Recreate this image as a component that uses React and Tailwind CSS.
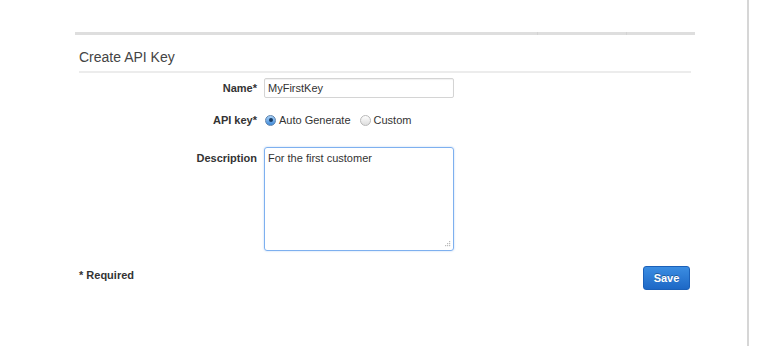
export default function App() {
  return (
    <div className="flex h-[346px] w-[778px] overflow-hidden bg-white font-['Liberation_Sans',Arial,sans-serif] text-[#333]">
      <div className="w-[747px] shrink-0 pl-[75px] pt-[32px]">
        <div className="w-[620px]">
          <div className="flex h-[3px] bg-[#dedede]">
            <div className="w-[462px]" />
            <div className="w-px bg-[#d3d3d3]" />
            <div className="w-[88px]" />
            <div className="w-px bg-[#d3d3d3]" />
          </div>
          <div className="mx-[4px] border-b-2 border-[#ececec] pt-[14px] pb-[5px] text-[14px] leading-[17px] text-[#444]">
            Create API Key
          </div>
          <div className="mx-[4px] mt-[5px] text-[11px] leading-[14px]">
            <div className="flex h-[20px] items-center">
              <div className="w-[178px] text-right font-bold">Name*</div>
              <input
                readOnly
                value="MyFirstKey"
                className="ml-[7px] h-[20px] w-[190px] rounded-[2px] border border-[#d4d4d4] px-[3px] text-[11px] text-[#333] shadow-[inset_0_1px_1px_rgba(0,0,0,0.06)] outline-none"
              />
            </div>
            <div className="mt-[12px] flex h-[20px] items-center">
              <div className="w-[178px] text-right font-bold">API key*</div>
              <div className="ml-[8px] flex items-center">
                <span className="flex h-[11px] w-[11px] items-center justify-center rounded-full border border-[#5f84ad] bg-gradient-to-b from-[#a9d2f8] to-[#3d8ad9]">
                  <span className="h-[4px] w-[4px] rounded-full bg-[#173a63]" />
                </span>
                <span className="ml-[3px]">Auto Generate</span>
                <span className="ml-[9px] h-[11px] w-[11px] rounded-full border border-[#b9b9b9] bg-gradient-to-b from-[#fdfdfd] to-[#dedede]" />
                <span className="ml-[3px]">Custom</span>
              </div>
            </div>
            <div className="mt-[17px] flex items-start">
              <div className="w-[178px] pt-[4px] text-right font-bold">Description</div>
              <div className="relative ml-[7px]">
                <textarea
                  readOnly
                  value="For the first customer"
                  className="block h-[104px] w-[190px] resize-none rounded-[3px] border border-[#7eb0ef] px-[3px] pt-[3px] text-[11px] leading-[14px] text-[#333] shadow-[0_0_2px_rgba(90,150,230,0.45)] outline-none"
                />
                <svg className="absolute bottom-[3px] right-[3px]" width="7" height="7" viewBox="0 0 7 7">
                  <rect x="5" y="0" width="1.2" height="1.2" fill="#bbb" />
                  <rect x="3" y="2" width="1.2" height="1.2" fill="#bbb" />
                  <rect x="5" y="2" width="1.2" height="1.2" fill="#bbb" />
                  <rect x="1" y="4" width="1.2" height="1.2" fill="#bbb" />
                  <rect x="3" y="4" width="1.2" height="1.2" fill="#bbb" />
                  <rect x="5" y="4" width="1.2" height="1.2" fill="#bbb" />
                </svg>
              </div>
            </div>
            <div className="mt-[15px] flex items-start justify-between">
              <div className="pt-[2px] font-bold">* Required</div>
              <button className="mr-[1px] h-[24px] w-[47px] rounded-[3px] border border-[#1b60b8] bg-gradient-to-b from-[#3b8de2] to-[#1d68c6] text-[11px] font-bold text-white [text-shadow:0_-1px_0_rgba(0,0,0,0.3)]">
                Save
              </button>
            </div>
          </div>
        </div>
      </div>
      <div className="w-[2px] shrink-0 bg-[#d6d6d6]" />
      <div className="flex-1" />
    </div>
  );
}
